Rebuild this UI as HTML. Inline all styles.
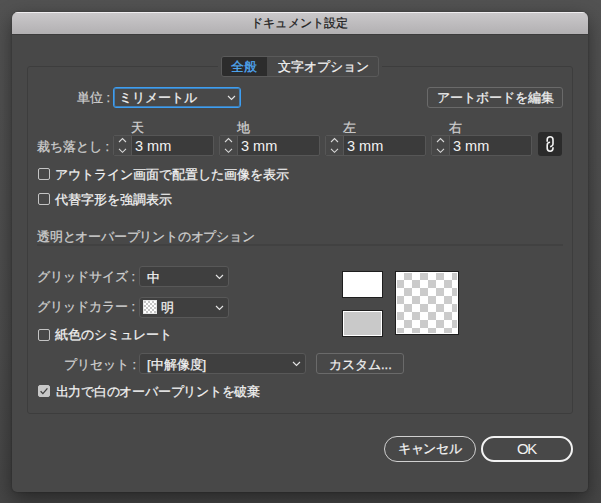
<!DOCTYPE html>
<html lang="ja">
<head>
<meta charset="utf-8">
<style>
html,body{margin:0;padding:0;}
body{width:601px;height:503px;overflow:hidden;background:linear-gradient(#525252,#4b4b4b 70%,#454545);position:relative;font-family:"Liberation Sans",sans-serif;font-size:13px;color:#e6e6e6;}
.a{position:absolute;}
.t{position:absolute;white-space:nowrap;line-height:1;-webkit-text-stroke:0.25px currentColor;}
#dlg{left:12px;top:12px;width:576px;height:480px;background:#484848;border-radius:6px 6px 5px 5px;box-shadow:0 0 2px rgba(0,0,0,.3),0 7px 20px rgba(0,0,0,.45);overflow:hidden;}
#title{left:0;top:0;width:576px;height:22px;background:linear-gradient(#cbc9cb,#b2b0b2);border-top:0;}
#title .hl{left:0;top:0;width:576px;height:1px;background:#efedef;}
#tline{left:0;top:22px;width:576px;height:1px;background:#3c3c3c;}
.lbl{color:#cfcfcf;}
.wh{color:#f2f2f2;}
.group{left:27px;top:66px;width:544px;height:346px;border:1px solid #3d3d3d;border-radius:3px;}
.dd{border:1px solid #585858;background:#3f3f3f;border-radius:3px;box-sizing:border-box;}
.btn{border:1px solid #6a6a6a;border-radius:3px;box-sizing:border-box;}
.fld{width:101px;height:21px;top:135px;border:1px solid #565656;border-radius:2px;box-sizing:border-box;background:#3b3b3b;overflow:hidden;}
.fld .st{left:0;top:0;width:17px;height:19px;background:#474747;border-right:1px solid #565656;}
.cb{width:12px;height:12px;box-sizing:border-box;border:1px solid #c4c4c4;border-radius:2px;}
.chev{width:9px;height:6px;}
</style>
</head>
<body>
<div id="dlg" class="a">
  <div id="title" class="a"><div class="hl a"></div></div>
  <div id="tline" class="a"></div>
</div>
<!-- title text -->
<div class="t" style="left:251px;top:17px;font-size:12px;color:#1c1c1c;letter-spacing:0.2px;">ドキュメント設定</div>

<!-- group box -->
<div class="a group"></div>

<!-- segmented -->
<div class="a" style="left:218px;top:66px;width:164px;height:1px;background:#484848;"></div>
<div class="a" style="left:221px;top:56px;width:156px;height:19px;border:1px solid #5a5a5a;border-radius:3px;background:#484848;"></div>
<div class="a" style="left:222px;top:57px;width:45px;height:19px;background:#2c2c2c;border-radius:2px 0 0 2px;"></div>
<div class="t" style="left:231px;top:60px;color:#50aaf6;">全般</div>
<div class="t wh" style="left:278px;top:60px;">文字オプション</div>

<!-- units -->
<div class="t lbl" style="left:77px;top:91px;">単位 :</div>
<div class="a dd" style="left:113px;top:87px;width:128px;height:20.5px;background:#484848;border:1px solid #3d9ef2;box-shadow:inset 0 0 0 1px rgba(61,158,242,.65);"></div>
<div class="t wh" style="left:118.5px;top:91px;">ミリメートル</div>
<svg class="a" style="left:227px;top:95px" width="9" height="6" viewBox="0 0 9 6"><path d="M1 1 L4.5 4.5 L8 1" stroke="#e4e4e4" stroke-width="1.15" fill="none"/></svg>

<div class="a btn" style="left:427px;top:87px;width:136px;height:21px;"></div>
<div class="t wh" style="left:437px;top:91px;">アートボードを編集</div>

<!-- bleed -->
<div class="t lbl" style="left:37px;top:140px;">裁ち落とし :</div>
<div class="t lbl" style="left:131px;top:121px;">天</div>
<div class="t lbl" style="left:237px;top:121px;">地</div>
<div class="t lbl" style="left:343px;top:121px;">左</div>
<div class="t lbl" style="left:449px;top:121px;">右</div>

<div class="a fld" style="left:113px;"><div class="a st"></div></div>
<svg class="a" style="left:117px;top:137px" width="10" height="18" viewBox="0 0 10 18"><path d="M2 5 L5.5 1.5 L9 5 M2 11.8 L5.5 15.3 L9 11.8" stroke="#d8d8d8" stroke-width="1.1" fill="none"/></svg>
<div class="a fld" style="left:219px;"><div class="a st"></div></div>
<svg class="a" style="left:223px;top:137px" width="10" height="18" viewBox="0 0 10 18"><path d="M2 5 L5.5 1.5 L9 5 M2 11.8 L5.5 15.3 L9 11.8" stroke="#d8d8d8" stroke-width="1.1" fill="none"/></svg>
<div class="a fld" style="left:325px;"><div class="a st"></div></div>
<svg class="a" style="left:329px;top:137px" width="10" height="18" viewBox="0 0 10 18"><path d="M2 5 L5.5 1.5 L9 5 M2 11.8 L5.5 15.3 L9 11.8" stroke="#d8d8d8" stroke-width="1.1" fill="none"/></svg>
<div class="a fld" style="left:431px;"><div class="a st"></div></div>
<svg class="a" style="left:435px;top:137px" width="10" height="18" viewBox="0 0 10 18"><path d="M2 5 L5.5 1.5 L9 5 M2 11.8 L5.5 15.3 L9 11.8" stroke="#d8d8d8" stroke-width="1.1" fill="none"/></svg>

<div class="t wh" style="left:135px;top:139px;font-size:14.5px;-webkit-text-stroke:0;">3 mm</div>
<div class="t wh" style="left:241px;top:139px;font-size:14.5px;-webkit-text-stroke:0;">3 mm</div>
<div class="t wh" style="left:347px;top:139px;font-size:14.5px;-webkit-text-stroke:0;">3 mm</div>
<div class="t wh" style="left:453px;top:139px;font-size:14.5px;-webkit-text-stroke:0;">3 mm</div>

<!-- link -->
<div class="a" style="left:538px;top:132px;width:24px;height:24px;background:#2b2b2b;border-radius:3px;"></div>
<svg class="a" style="left:538px;top:132px" width="24" height="24" viewBox="0 0 24 24"><path d="M9.2 9.8 V7.7 A2.9 2.9 0 0 1 15 7.7 V11.7 A2.9 2.9 0 0 1 12.1 14.6" stroke="#f4f4f4" stroke-width="1.6" fill="none"/><path d="M12.1 10.3 A2.9 2.9 0 0 0 9.2 13.2 V16.3 A2.9 2.9 0 0 0 15 16.3 V15.2" stroke="#f4f4f4" stroke-width="1.6" fill="none"/></svg>

<!-- checkboxes -->
<div class="a cb" style="left:38px;top:168px;"></div>
<div class="t wh" style="left:55px;top:168px;">アウトライン画面で配置した画像を表示</div>
<div class="a cb" style="left:38px;top:193px;"></div>
<div class="t wh" style="left:55px;top:193px;">代替字形を強調表示</div>

<div class="t lbl" style="left:37px;top:230px;letter-spacing:-0.2px;">透明とオーバープリントのオプション</div>
<div class="a" style="left:37px;top:244px;width:526px;height:2px;background:#414141;"></div>

<div class="t lbl" style="left:37px;top:270px;">グリッドサイズ :</div>
<div class="a dd" style="left:139px;top:266px;width:90px;height:21px;"></div>
<div class="t wh" style="left:147px;top:271px;">中</div>
<svg class="a" style="left:215px;top:274px" width="9" height="6" viewBox="0 0 9 6"><path d="M1 1 L4.5 4.5 L8 1" stroke="#e4e4e4" stroke-width="1.15" fill="none"/></svg>

<div class="t lbl" style="left:37px;top:300px;">グリッドカラー :</div>
<div class="a dd" style="left:139px;top:297px;width:90px;height:21px;"></div>
<div class="t wh" style="left:161px;top:301px;">明</div>
<svg class="a" style="left:215px;top:305px" width="9" height="6" viewBox="0 0 9 6"><path d="M1 1 L4.5 4.5 L8 1" stroke="#e4e4e4" stroke-width="1.15" fill="none"/></svg>
<div class="a" style="left:143px;top:300px;width:12px;height:12px;border:1px solid #e6e6e6;background:repeating-conic-gradient(#fff 0 25%,#c6c6c6 0 50%) 0 0/4px 4px;"></div>

<div class="a cb" style="left:38px;top:329px;"></div>
<div class="t wh" style="left:55px;top:328px;">紙色のシミュレート</div>

<div class="t lbl" style="left:64px;top:358px;">プリセット :</div>
<div class="a dd" style="left:139px;top:353px;width:167px;height:21px;"></div>
<div class="t wh" style="left:147px;top:358px;">[中解像度]</div>
<svg class="a" style="left:292px;top:361px" width="9" height="6" viewBox="0 0 9 6"><path d="M1 1 L4.5 4.5 L8 1" stroke="#e4e4e4" stroke-width="1.15" fill="none"/></svg>

<div class="a btn" style="left:316px;top:353px;width:88px;height:21px;"></div>
<div class="t wh" style="left:329px;top:358px;">カスタム...</div>

<div class="a cb" style="left:38px;top:385px;background:#c8c8c8;border-color:#c8c8c8;"></div>
<svg class="a" style="left:38px;top:385px" width="12" height="12" viewBox="0 0 12 12"><path d="M2.6 6.2 L4.9 8.6 L9.4 3.4" stroke="#404040" stroke-width="1.3" fill="none"/></svg>
<div class="t wh" style="left:55.5px;top:385px;letter-spacing:-0.22px;">出力で白のオーバープリントを破棄</div>

<!-- swatches -->
<div class="a" style="left:342px;top:271px;width:39px;height:25px;border:1px solid #1e1e1e;background:#fff;"></div>
<div class="a" style="left:342px;top:310px;width:39px;height:25px;border:1px solid #1e1e1e;background:#c9c9c9;box-shadow:inset 0 0 0 1px #fff;"></div>
<div class="a" style="left:395px;top:271px;width:62px;height:62px;border:1px solid #1e1e1e;background:repeating-conic-gradient(#cbcbcb 0 25%,#fff 0 50%) 0 0/16px 16px;box-shadow:inset 0 0 0 1px #fff;"></div>

<!-- bottom buttons -->
<div class="a" style="left:384px;top:436px;width:92px;height:26px;box-sizing:border-box;border:1px solid #d0d0d0;border-radius:13px;"></div>
<div class="t wh" style="left:398px;top:441.5px;letter-spacing:-0.3px;">キャンセル</div>
<div class="a" style="left:481px;top:436px;width:92px;height:26px;box-sizing:border-box;border:2px solid #f2f2f2;border-radius:13px;"></div>
<div class="t wh" style="left:517px;top:440.5px;font-size:15px;letter-spacing:-1.4px;-webkit-text-stroke:0;">OK</div>
</body>
</html>
